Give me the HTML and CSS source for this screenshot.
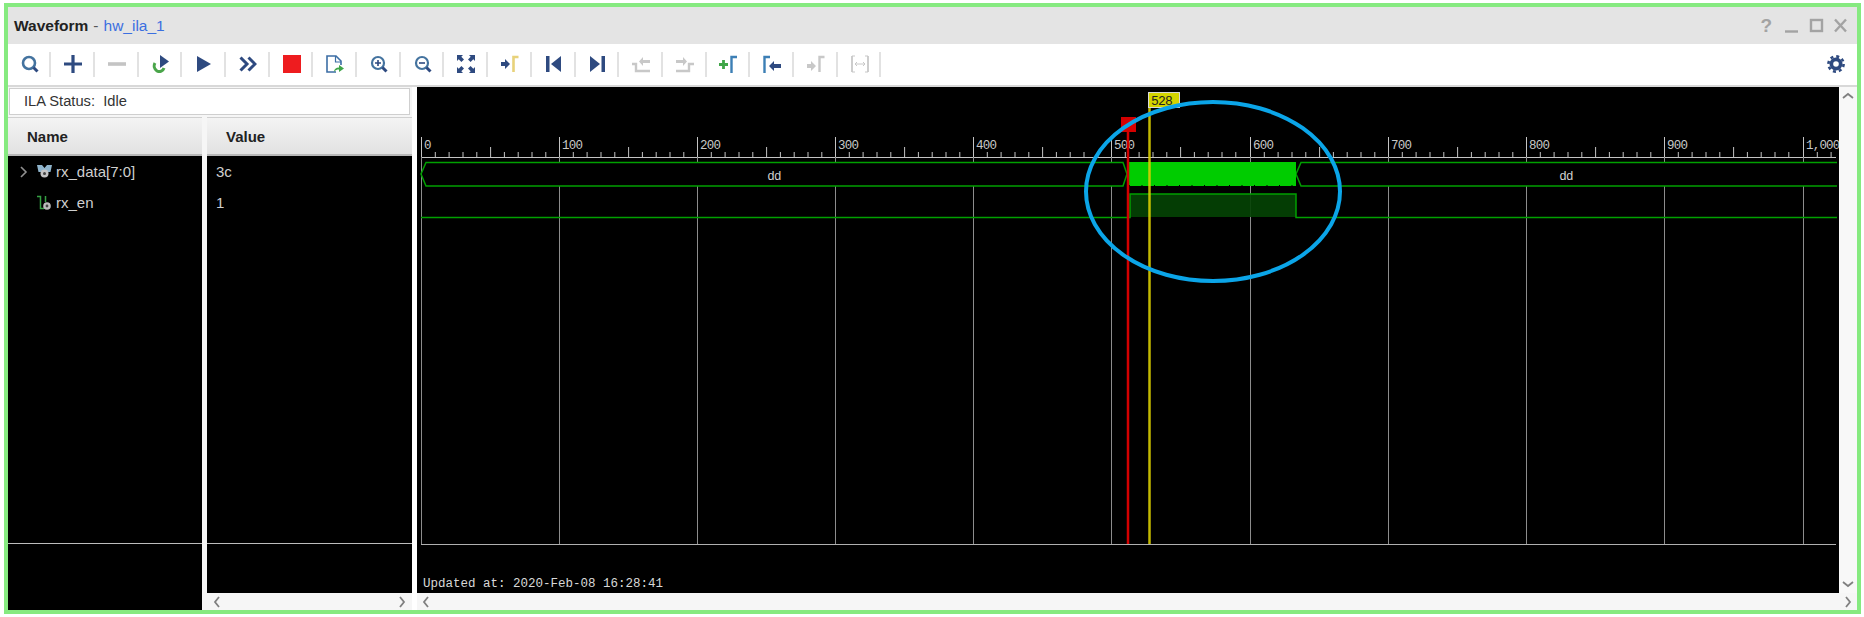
FILE: index.html
```html
<!DOCTYPE html>
<html lang="en">
<head>
    <meta charset="UTF-8">
    <title>Waveform - hw_ila_1</title>
    <link rel="stylesheet" href="styles.css">
</head>
<body>
<div class="window">
    <div class="titlebar">
        <span class="title-name">Waveform</span>
        <span class="title-dash">-</span>
        <span class="title-link">hw_ila_1</span>
        <div class="window-controls">
            <span class="help">?</span>
            <svg width="62" height="16" viewBox="0 0 62 16" fill="none" stroke="#a3a3a3" stroke-width="2.4">
                <path d="M0 13.500h13"/>
                <rect x="26" y="2" width="11" height="11"/>
                <path d="M50 1.500l11 12M61 1.500l-11 12"/>
            </svg>
        </div>
    </div>

    <div class="toolbar">
        <div class="tool"><svg class="icon" viewBox="0 0 18 18" fill="none"><circle cx="8" cy="8" r="6" stroke="#44739f" stroke-width="2.6"/><path d="M12.500 12.500l4 4" stroke="#2e4a80" stroke-width="3"/></svg></div>
        <div class="tool"><svg class="icon" viewBox="0 0 18 18" fill="none" stroke="#2e4a80" stroke-width="3.2"><path d="M9 0v18M0 9h18"/></svg></div>
        <div class="tool"><svg class="icon" viewBox="0 0 18 18" fill="none" stroke="#c4c4c4" stroke-width="3.6"><path d="M0 9h18"/></svg></div>
        <div class="tool"><svg class="icon" viewBox="0 0 18 18" fill="none"><path d="M3 8a6 6 0 0 0 2 8c3 1.500 6 0 7-3" stroke="#4aa54a" stroke-width="3"/><path d="M8 0l9 6.500-9 6.500z" fill="#2e4a80"/></svg></div>
        <div class="tool"><svg class="icon" viewBox="0 0 18 18"><path d="M2 1l14 8-14 8z" fill="#2e4a80"/></svg></div>
        <div class="tool"><svg class="icon" viewBox="0 0 18 18" fill="none" stroke="#2e4a80" stroke-width="3"><path d="M1.500 2.500L8 9l-6.500 6.500M9.500 2.500L16 9l-6.500 6.500"/></svg></div>
        <div class="tool"><svg class="icon" viewBox="0 0 18 18"><rect width="18" height="18" fill="#ee1c1f"/></svg></div>
        <div class="tool"><svg class="icon" viewBox="0 0 18 18" fill="none"><path d="M10 17H1V1h9l5 5v4" stroke="#3c6ea5" stroke-width="1.600"/><path d="M9.500 1v6H15" stroke="#3c6ea5" stroke-width="1.200"/><path d="M8 17c0-3 2-4.500 5-4.500V10l5 3.500-5 3.500v-2.500c-2 0-3.500.5-5 2.500z" fill="#3fa548"/></svg></div>
        <div class="tool"><svg class="icon" viewBox="0 0 18 18" fill="none"><circle cx="8" cy="8" r="6" stroke="#44739f" stroke-width="2.200"/><path d="M8 5v6M5 8h6" stroke="#2e4a80" stroke-width="1.600"/><path d="M12.500 12.500l4 4" stroke="#2e4a80" stroke-width="3"/></svg></div>
        <div class="tool"><svg class="icon" viewBox="0 0 18 18" fill="none"><circle cx="8" cy="8" r="6" stroke="#44739f" stroke-width="2.200"/><path d="M5 8h6" stroke="#2e4a80" stroke-width="1.600"/><path d="M12.500 12.500l4 4" stroke="#2e4a80" stroke-width="3"/></svg></div>
        <div class="tool"><svg class="icon" viewBox="0 0 18 18" fill="#2e4a80"><path d="M0 0h6L4.300 1.700 7 4.400 4.400 7 1.700 4.300 0 6zM18 0v6l-1.700-1.700L13.600 7 11 4.400l2.700-2.700L12 0zM0 18v-6l1.700 1.700L4.400 11 7 13.600l-2.700 2.700L6 18zM18 18h-6l1.700-1.700L11 13.600 13.600 11l2.700 2.700L18 12z"/></svg></div>
        <div class="tool"><svg class="icon" viewBox="0 0 18 18" fill="none"><path d="M0 7h4V4l5 5-5 5v-3H0z" fill="#2e4a80"/><path d="M17.500 2H12.500v15" stroke="#e8d27a" stroke-width="2.600"/></svg></div>
        <div class="tool"><svg class="icon" viewBox="0 0 18 18"><path d="M1 1h3.500v16H1zM16 1v16L6 9z" fill="#2e4a80"/></svg></div>
        <div class="tool"><svg class="icon" viewBox="0 0 18 18"><path d="M17 1h-3.500v16H17zM2 1v16l10-8z" fill="#2e4a80"/></svg></div>
        <div class="tool"><svg class="icon" viewBox="0 0 18 18" fill="none"><path d="M0 9h4V16h14" stroke="#c8c8c8" stroke-width="2.400"/><path d="M18 5h-7V2L7 6.500 11 11V8h7z" fill="#c8c8c8"/></svg></div>
        <div class="tool"><svg class="icon" viewBox="0 0 18 18" fill="none"><path d="M0 16h13V9h5" stroke="#c8c8c8" stroke-width="2.400"/><path d="M0 5h7V2l4 4.500L7 11V8H0z" fill="#c8c8c8"/></svg></div>
        <div class="tool"><svg class="icon" viewBox="0 0 18 18" fill="none"><path d="M0 9.500h9M4.500 5v9" stroke="#3fa548" stroke-width="2.800"/><path d="M18 2h-5.500v16" stroke="#3c7fb5" stroke-width="2.400"/></svg></div>
        <div class="tool"><svg class="icon" viewBox="0 0 18 18" fill="none"><path d="M7 2H1.500v16" stroke="#3c7fb5" stroke-width="2.400"/><path d="M18 9h-7V6l-5 5 5 5v-3h7z" fill="#2e4a80"/></svg></div>
        <div class="tool"><svg class="icon" viewBox="0 0 18 18" fill="none"><path d="M0 9h4V6l5 5-5 5v-3H0z" fill="#c8c8c8"/><path d="M17.500 2H12.500v15" stroke="#c8c8c8" stroke-width="2.400"/></svg></div>
        <div class="tool"><svg class="icon" viewBox="0 0 18 18" fill="none" stroke="#c8c8c8"><path d="M1 1v16M17 1v16" stroke-width="1.800"/><path d="M1 1h3M1 17h3M17 1h-3M17 17h-3" stroke-width="1.200"/><path d="M4 9h10M6 7l-2 2 2 2M12 7l2 2-2 2" stroke-width="1"/></svg></div>
        <div class="toolbar-space"></div>
        <svg class="gear" viewBox="0 0 18 18">
            <circle cx="9" cy="9" r="6.500" fill="#2e4a80"/>
            <circle cx="9" cy="9" r="7.600" fill="none" stroke="#2e4a80" stroke-width="2.600" stroke-dasharray="3 2.970"/>
            <circle cx="9" cy="9" r="2.800" fill="#fff"/>
        </svg>
    </div>

    <div class="content">
        <div class="side">
            <div class="status">ILA Status:&nbsp; Idle</div>
            <div class="columns">
                <div class="column column-name">
                    <div class="col-header">Name</div>
                    <div class="col-body">
                        <div class="signal-row">
                            <svg class="expander" viewBox="0 0 8 12" fill="none" stroke="#909090" stroke-width="1.600"><path d="M1 1l5 5-5 5"/></svg>
                            <svg class="sig-icon" viewBox="0 0 15 15"><path d="M0 1h5l2.500 3L10 1h5l-1.500 7H11L7.500 10 4 8H1.500z" fill="#8fb4cc"/><circle cx="7.500" cy="9.500" r="4" fill="#c4c4c4"/><circle cx="7.500" cy="9.500" r="1.500" fill="#444"/></svg>
                            <span>rx_data[7:0]</span>
                        </div>
                        <div class="signal-row">
                            <span class="expander"></span>
                            <svg class="sig-icon" viewBox="0 0 15 15" fill="none"><path d="M0 1.500h3.500v12H7M8.500 1v6" stroke="#35a043" stroke-width="1.500"/><circle cx="10" cy="11" r="3.800" fill="#bdbdbd"/><circle cx="10" cy="11" r="1.400" fill="#444"/></svg>
                            <span>rx_en</span>
                        </div>
                        <div class="col-foot col-foot-tall"></div>
                    </div>
                </div>
                <div class="column column-value">
                    <div class="col-header">Value</div>
                    <div class="col-body">
                        <div class="value-row">3c</div>
                        <div class="value-row">1</div>
                        <div class="col-foot"></div>
                    </div>
                    <div class="hscroll">
                        <svg class="chev" viewBox="0 0 8 12"><path d="M6 1L2 6l4 5"/></svg>
                        <svg class="chev" viewBox="0 0 8 12"><path d="M2 1l4 5-4 5"/></svg>
                    </div>
                </div>
            </div>
        </div>

        <div class="wave-pane">
            <div class="wave-top">
                <svg class="wave" viewBox="417 87 1422 506" width="1422" height="506">
                    <defs>
                        <path id="ruler-block" d="M.5 137v20M14.300 152v5M28.100 152v5M42 152v5M55.800 152v5M69.600 147v10M83.400 152v5M97.200 152v5M111 152v5M124.800 152v5"/>
                    </defs>

                    <!-- ruler -->
                    <g class="ruler-ticks">
                        <use href="#ruler-block" x="421"/>
                        <use href="#ruler-block" x="559"/>
                        <use href="#ruler-block" x="697"/>
                        <use href="#ruler-block" x="835"/>
                        <use href="#ruler-block" x="973"/>
                        <use href="#ruler-block" x="1111"/>
                        <use href="#ruler-block" x="1250"/>
                        <use href="#ruler-block" x="1388"/>
                        <use href="#ruler-block" x="1526"/>
                        <use href="#ruler-block" x="1664"/>
                        <path d="M1803.500 137v20M1817.300 152v5M1831.100 152v5M421 157.500H1836"/>
                    </g>
                    <g class="ruler-text">
                        <text x="424" y="149">0</text>
                        <text x="562" y="149">100</text>
                        <text x="700" y="149">200</text>
                        <text x="838" y="149">300</text>
                        <text x="976" y="149">400</text>
                        <text x="1114" y="149">500</text>
                        <text x="1253" y="149">600</text>
                        <text x="1391" y="149">700</text>
                        <text x="1529" y="149">800</text>
                        <text x="1667" y="149">900</text>
                        <text x="1806" y="149">1,000</text>
                    </g>

                    <!-- grid, the bus row sits on black -->
                    <path class="grid" d="M421.500 157V544M559.500 157V544M697.500 157V544M835.500 157V544M973.500 157V544M1111.500 157V544M1250.500 157V544M1388.500 157V544M1526.500 157V544M1664.500 157V544M1803.500 157V544"/>
                    <rect x="422" y="163" width="1414" height="23" fill="#000"/>
                    <path d="M421 544.500H1836" stroke="#b0b0b0" stroke-width="1"/>

                    <!-- rx_data -->
                    <path class="trace" d="M1123 162.500H426L421 174l5 12H1123l4-12zM1837 162.500H1301l-5 11.500 5 12H1837"/>
                    <rect x="1129" y="162" width="167" height="24" fill="#00cc00"/>
                    <path d="M1129 185.500H1296" stroke="#000" stroke-width="1" stroke-dasharray="1 11.500"/>
                    <text class="bus-text" x="774" y="180">dd</text>
                    <text class="bus-text" x="1566" y="180">dd</text>

                    <!-- rx_en -->
                    <rect x="1130" y="194" width="166" height="23" fill="#044204" opacity="0.92"/>
                    <path class="trace" d="M421 217.500H1130V194H1296V217.500H1837"/>

                    <!-- markers -->
                    <path d="M1128 132V544" stroke="#d40000" stroke-width="2.500"/>
                    <rect x="1121" y="117" width="15" height="15" fill="#d40000"/>
                    <path d="M1149.500 107V544" stroke="#d8cc00" stroke-width="2.500" opacity="0.9"/>
                    <rect x="1148.500" y="92.500" width="31" height="15" fill="#d4d400" stroke="#d8d8d8"/>
                    <text class="flag-text" x="1151" y="105">528</text>

                    <ellipse class="annotation" cx="1213" cy="191.500" rx="127" ry="89.500"/>

                    <text class="updated" x="423" y="587">Updated at: 2020-Feb-08 16:28:41</text>
                </svg>
                <div class="vscroll">
                    <svg class="chev" viewBox="0 0 12 8"><path d="M1 6l5-4 5 4"/></svg>
                    <svg class="chev" viewBox="0 0 12 8"><path d="M1 2l5 4 5-4"/></svg>
                </div>
            </div>
            <div class="hscroll hscroll-wave">
                <svg class="chev" viewBox="0 0 8 12"><path d="M6 1L2 6l4 5"/></svg>
                <svg class="chev" viewBox="0 0 8 12"><path d="M2 1l4 5-4 5"/></svg>
            </div>
        </div>
    </div>
</div>
</body>
</html>
```

FILE: styles.css
```css
body {
    margin: 0;
    background: #fff;
    font-family: "Liberation Sans", Arial, sans-serif;
}
.window {
    height: 603px;
    margin: 3px 3px 3px 4px;
    border: 4px solid #86ea80;
    display: flex;
    flex-direction: column;
}

/* title */
.titlebar {
    height: 37px;
    background: #e4e4e4;
    display: flex;
    align-items: center;
    padding-left: 6px;
    font-size: 15.500px;
    flex-shrink: 0;
}
.title-name {
    font-weight: bold;
    color: #222;
}
.title-dash {
    margin: 0 5px;
    color: #555;
}
.title-link {
    color: #3b6fe0;
}
.window-controls {
    margin-left: auto;
    margin-right: 10px;
    display: flex;
    align-items: center;
    gap: 13px;
}
.help {
    font-size: 19px;
    font-weight: bold;
    color: #a3a3a3;
}

/* toolbar */
.toolbar {
    height: 41px;
    box-sizing: content-box;
    background: #fff;
    border-bottom: 2px solid #d8d8d8;
    display: flex;
    align-items: center;
    flex-shrink: 0;
}
.tool {
    width: 43.700px;
    height: 25px;
    box-sizing: border-box;
    padding-left: 2px;
    margin-bottom: 1px;
    border-right: 2px solid #e2e2e2;
    display: flex;
    align-items: center;
    justify-content: center;
    flex-shrink: 0;
}
.tool:first-child {
    width: 43.300px;
}
.icon {
    width: 18px;
    height: 18px;
}
.toolbar-space {
    flex: 1;
}
.gear {
    width: 18px;
    height: 18px;
    margin-right: 12px;
    margin-bottom: 1px;
}

/* left side */
.content {
    flex: 1;
    display: flex;
    min-height: 0;
}
.side {
    width: 404px;
    display: flex;
    flex-direction: column;
    background: #f6f6f6;
    flex-shrink: 0;
}
.status {
    height: 27px;
    line-height: 25px;
    box-sizing: border-box;
    margin: 1px 2px 2px 1px;
    border: 1px solid #cfcfcf;
    background: #fff;
    padding-left: 14px;
    font-size: 14.700px;
    color: #333;
}
.columns {
    flex: 1;
    display: flex;
    gap: 5px;
    min-height: 0;
}
.column {
    display: flex;
    flex-direction: column;
}
.column-name {
    width: 194px;
}
.column-value {
    width: 205px;
}
.col-header {
    height: 39px;
    line-height: 38px;
    box-sizing: border-box;
    padding-left: 19px;
    background: linear-gradient(#f4f4f4, #e2e2e2);
    border-top: 1px solid #d0d0d0;
    border-bottom: 2px solid #b8b8b8;
    font-size: 15px;
    font-weight: bold;
    color: #222;
}
.col-body {
    flex: 1;
    background: #000;
    color: #cfcfcf;
    font-size: 15px;
    display: flex;
    flex-direction: column;
}
.signal-row, .value-row {
    height: 31px;
    line-height: 31px;
    display: flex;
    align-items: center;
}
.value-row {
    padding-left: 9px;
}
.expander {
    width: 8px;
    height: 12px;
    margin: 0 9px 0 12px;
    flex-shrink: 0;
}
.sig-icon {
    width: 15px;
    height: 15px;
    margin-right: 4px;
}
.col-foot {
    margin-top: auto;
    height: 49px;
    border-top: 1px solid #bdbdbd;
}
.col-foot-tall {
    height: 66px;
}

/* scrollbars */
.hscroll {
    height: 17px;
    background: #f6f6f6;
    display: flex;
    align-items: center;
    justify-content: space-between;
    padding: 0 6px;
    flex-shrink: 0;
}
.hscroll-wave {
    padding: 0 5px;
}
.vscroll {
    width: 18px;
    background: #f8f8f8;
    display: flex;
    flex-direction: column;
    align-items: center;
    justify-content: space-between;
    padding: 5px 0;
    box-sizing: border-box;
}
.chev {
    fill: none;
    stroke: #808080;
    stroke-width: 1.800;
}
.hscroll .chev {
    width: 8px;
    height: 12px;
}
.vscroll .chev {
    width: 12px;
    height: 8px;
}

/* waveform */
.wave-pane {
    flex: 1;
    margin-left: 5px;
    display: flex;
    flex-direction: column;
    min-width: 0;
}
.wave-top {
    flex: 1;
    display: flex;
    min-height: 0;
}
.wave {
    display: block;
    background: #000;
    flex-shrink: 0;
}
.ruler-ticks {
    fill: none;
    stroke: #c4c4c4;
    stroke-width: 1;
}
.grid {
    fill: none;
    stroke: #8c8c8c;
    stroke-width: 1;
}
.ruler-text text, .bus-text, .updated, .flag-text {
    font-family: "Liberation Mono", monospace;
}
.ruler-text text {
    font-size: 12.500px;
    letter-spacing: -0.800px;
    fill: #c8c8c8;
}
.bus-text {
    font-size: 12.500px;
    letter-spacing: -0.800px;
    fill: #d0d0d0;
    text-anchor: middle;
}
.flag-text {
    font-size: 13px;
    letter-spacing: -0.800px;
    fill: #222;
}
.updated {
    font-size: 12.500px;
    fill: #d8d8d8;
}
.trace {
    fill: none;
    stroke: #00a000;
    stroke-width: 1.500;
}
.annotation {
    fill: none;
    stroke: #0ba5e8;
    stroke-width: 4;
}
```
